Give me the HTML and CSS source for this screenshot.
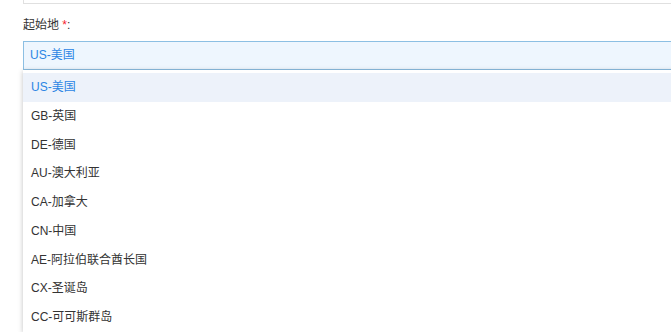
FILE: index.html
```html
<!DOCTYPE html>
<html lang="zh-CN">

<head>
  <meta charset="UTF-8">
  <meta name="viewport" content="width=device-width, initial-scale=1.0">
  <title>起始地</title>
  <link rel="stylesheet" href="styles.css">
</head>

<body>
  <div class="form">
    <div class="prev-field"></div>

    <div class="field">
      <label class="field-label">起始地 <span class="req">*</span>:</label>
      <div class="select">
        <span class="select-value">US-美国</span>
      </div>
      <ul class="dropdown">
        <li class="option active">US-美国</li>
        <li class="option">GB-英国</li>
        <li class="option">DE-德国</li>
        <li class="option">AU-澳大利亚</li>
        <li class="option">CA-加拿大</li>
        <li class="option">CN-中国</li>
        <li class="option">AE-阿拉伯联合酋长国</li>
        <li class="option">CX-圣诞岛</li>
        <li class="option">CC-可可斯群岛</li>
      </ul>
    </div>
  </div>
</body>

</html>
```

FILE: styles.css
```css
html,
body {
  margin: 0;
  padding: 0;
  height: 100%;
  overflow: hidden;
  background-color: #fff;
}

body {
  font-family: "Liberation Sans", Arial, "Noto Sans CJK SC", sans-serif;
  font-size: 12px;
  color: #333;
}

.form {
  padding-left: 23px;
}

/* bottom edge of the field above */
.prev-field {
  height: 3px;
  border: 1px solid #e0e0e0;
  border-top: none;
  margin-right: -30px;
}

.field {
  margin-top: 12px;
}

.field-label {
  display: block;
  line-height: 18px;
  color: #333;
}

.req {
  color: #f5222d;
}

.select {
  margin-top: 7px;
  height: 27px;
  line-height: 27px;
  border: 1px solid #8cbfe3;
  background-color: #eef6fe;
  margin-right: -30px;
  padding-left: 6px;
}

.select-value {
  color: #2b85e4;
}

.dropdown {
  list-style: none;
  margin: 0 -30px 0 0;
  padding: 3px 0 0;
  background-color: #fff;
  box-shadow: 0 1px 5px rgba(0, 0, 0, 0.25);
}

.option {
  height: 28.75px;
  line-height: 28.75px;
  padding-left: 8px;
  color: #333;
}

.option.active {
  background-color: #edf2fa;
  color: #2b85e4;
}
```
